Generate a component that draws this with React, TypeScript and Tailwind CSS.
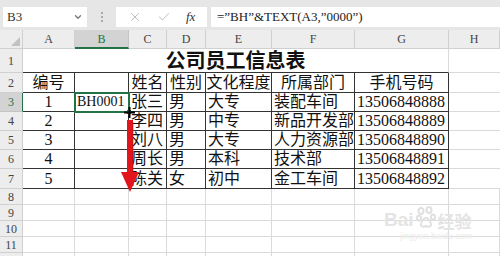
import { X, Check, ChevronDown } from 'lucide-react'

const serif = "font-['Liberation_Serif','Noto_Sans_CJK_SC',serif]"
const cjk = "font-['Liberation_Serif','Noto_Sans_CJK_SC',sans-serif]"

const cols = ['A', 'B', 'C', 'D', 'E', 'F', 'G', 'H']
const colTemplate = 'grid-cols-[23px_52px_54px_38px_39px_66px_83px_94px_1fr]'

type Align = 'c' | 'l'
type Cell = { text?: string; align?: Align; small?: boolean }

// rows 2..7 of the sheet, columns A..G
const table: Cell[][] = [
  [{ text: '编号', align: 'c' }, {}, { text: '姓名', align: 'c' }, { text: '性别', align: 'c' }, { text: '文化程度', align: 'c' }, { text: '所属部门', align: 'c' }, { text: '手机号码', align: 'c' }],
  [{ text: '1', align: 'c' }, { text: 'BH0001', small: true }, { text: '张三' }, { text: '男' }, { text: '大专' }, { text: '装配车间' }, { text: '13506848888' }],
  [{ text: '2', align: 'c' }, {}, { text: '李四' }, { text: '男' }, { text: '中专' }, { text: '新品开发部' }, { text: '13506848889' }],
  [{ text: '3', align: 'c' }, {}, { text: '刘八' }, { text: '男' }, { text: '大专' }, { text: '人力资源部' }, { text: '13506848890' }],
  [{ text: '4', align: 'c' }, {}, { text: '周长' }, { text: '男' }, { text: '本科' }, { text: '技术部' }, { text: '13506848891' }],
  [{ text: '5', align: 'c' }, {}, { text: '陈关' }, { text: '女' }, { text: '初中' }, { text: '金工车间' }, { text: '13506848892' }],
]

const tableHeights = ['h-[20px]', 'h-[19px]', 'h-[19px]', 'h-[19px]', 'h-[19px]', 'h-[20px]']

function RowHead({ n, h, active }: { n: number; h: string; active?: boolean }) {
  return (
    <div
      className={`${h} ${serif} flex items-center justify-center text-[12px] border-b border-r ${
        active ? 'bg-[#d3d3d3] text-[#217346] border-r-[#217346] border-b-[#c4c4c4]' : 'bg-[#ededed] text-[#444] border-[#d0d0d0]'
      }`}
    >
      {n}
    </div>
  )
}

function FormulaBar() {
  return (
    <div className="h-[30px] bg-[#e6e6e6] flex items-center pt-[4px] pl-[3px] gap-[4px]">
      <div className={`w-[84px] h-[20px] bg-white flex items-center justify-between px-[4px] ${serif} text-[13px] text-[#333]`}>
        <span>B3</span>
        <ChevronDown size={10} strokeWidth={3} className="text-[#777]" />
      </div>
      <div className="w-[21px] flex flex-col items-center gap-[2px]">
        <span className="w-[2px] h-[2px] bg-[#aaa]" />
        <span className="w-[2px] h-[2px] bg-[#aaa]" />
        <span className="w-[2px] h-[2px] bg-[#aaa]" />
      </div>
      <div className="w-[91px] h-[20px] bg-white flex items-center justify-around px-[4px]">
        <X size={14} strokeWidth={1.25} className="text-[#a5a5a5]" />
        <Check size={14} strokeWidth={1.25} className="text-[#a5a5a5]" />
        <span className={`${serif} italic text-[13px] text-[#333]`}>fx</span>
      </div>
      <div className={`flex-1 h-[20px] bg-white flex items-center pl-[6px] ${serif} text-[13px] text-[#222]`}>
        =”BH”&amp;TEXT(A3,”0000”)
      </div>
    </div>
  )
}

export default function App() {
  return (
    <div className="w-[500px] h-[256px] overflow-hidden bg-white relative">
      <FormulaBar />

      <div className={`grid ${colTemplate}`}>
        {/* column letters */}
        <div className="h-[19px] bg-[#ededed] border-r border-b border-[#d0d0d0] flex items-end justify-end p-[2px]">
          <div className="w-0 h-0 border-l-[9px] border-l-transparent border-b-[9px] border-b-[#c2c2c2]" />
        </div>
        {cols.map((c) => (
          <div
            key={c}
            className={`h-[19px] ${serif} text-[12px] flex items-center justify-center border-r ${
              c === 'B'
                ? 'bg-[#d3d3d3] text-[#217346] border-b-2 border-b-[#217346] border-r-[#c4c4c4]'
                : 'bg-[#ededed] text-[#444] border-b border-[#d0d0d0]'
            }`}
          >
            {c}
          </div>
        ))}

        {/* row 1: merged title */}
        <RowHead n={1} h="h-[24px]" />
        <div className={`col-span-7 h-[24px] flex items-center justify-center border-b border-b-[#333] border-r border-r-[#dadada] ${cjk} font-bold text-[20px] text-[#111]`}>
          公司员工信息表
        </div>
        <div className="h-[24px] border-b border-[#dadada]" />

        {/* rows 2-7: bordered table */}
        {table.map((row, i) => (
          <div key={i} className="contents">
            <RowHead n={i + 2} h={tableHeights[i]} active={i === 1} />
            {row.map((cell, j) => (
              <div
                key={j}
                className={`${tableHeights[i]} overflow-hidden whitespace-nowrap flex items-center border-r border-b border-[#333] ${cjk} ${
                  cell.small ? 'text-[14px]' : 'text-[16px]'
                } leading-none text-[#111] ${cell.align === 'c' ? 'justify-center' : 'pl-[2px]'}`}
              >
                {cell.text}
              </div>
            ))}
            <div className={`${tableHeights[i]} border-b border-[#dadada]`} />
          </div>
        ))}

        {/* empty rows */}
        {[8, 9, 10, 11].map((n) => (
          <div key={n} className="contents">
            <RowHead n={n} h="h-[16px]" />
            {cols.map((c) => (
              <div key={c} className="h-[16px] border-r border-b border-[#dadada]" />
            ))}
          </div>
        ))}
        <div className="h-[8px] bg-[#ededed] border-r border-[#d0d0d0]" />
        {cols.map((c) => (
          <div key={c} className="h-[8px] border-r border-[#dadada]" />
        ))}
      </div>

      {/* active cell B3 */}
      <div className="absolute left-[74px] top-[92px] w-[56px] h-[21px] border-2 border-[#217346] pointer-events-none" />
      <div className="absolute left-[127px] top-[110px] w-[4px] h-[4px] bg-[#217346]" />

      {/* drag cursor */}
      <svg className="absolute left-[124px] top-[107px]" width="11" height="11" viewBox="0 0 11 11">
        <path d="M5.5 0v11M0 5.5h11" stroke="#000" strokeWidth="2" />
      </svg>

      {/* fill-down arrow */}
      <svg className="absolute left-[119px] top-[118px]" width="22" height="76" viewBox="0 0 22 76">
        <rect x="8" y="2" width="6" height="54" fill="#e3151c" />
        <path d="M2 54 L20 54 L11 74 Z" fill="#e3151c" />
        <rect x="13" y="4" width="1.5" height="50" fill="#b80f14" opacity="0.5" />
      </svg>

      {/* watermark */}
      <div className="absolute left-[384px] top-[206px] flex items-end gap-[2px] text-[#e4e4e4] pointer-events-none">
        <span className="font-['Liberation_Sans',sans-serif] font-bold text-[19px] leading-none">Bai</span>
        <svg width="20" height="22" viewBox="0 0 20 22" className="mb-[1px]">
          <g fill="none" stroke="#e0e0e0" strokeWidth="2">
            <ellipse cx="5" cy="5" rx="2.5" ry="3" />
            <ellipse cx="13" cy="4" rx="2.5" ry="3" />
            <ellipse cx="3" cy="12" rx="2" ry="2.5" />
            <ellipse cx="17" cy="11" rx="2" ry="2.5" />
            <path d="M5 19c0-4 3-7 5-7s5 3 5 7c0 2-3 2-5 1-2 1-5 1-5-1z" />
          </g>
        </svg>
        <span className="font-['Noto_Sans_CJK_SC',sans-serif] font-bold text-[17px] leading-none">经验</span>
      </div>
      <div className="absolute left-[400px] top-[230px] font-['Liberation_Sans',sans-serif] text-[9px] text-[#ececec] pointer-events-none">
        jingyan.baidu.com
      </div>
    </div>
  )
}
